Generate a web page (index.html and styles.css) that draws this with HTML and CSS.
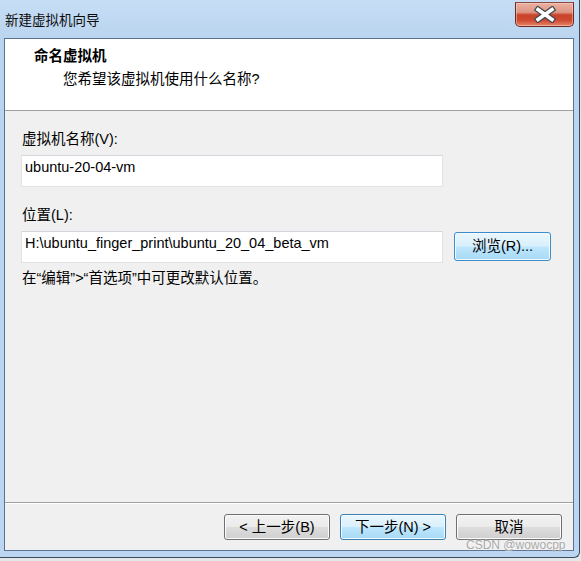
FILE: index.html
```html
<!DOCTYPE html>
<html lang="zh-CN">
<head>
<meta charset="utf-8">
<title>新建虚拟机向导</title>
<link rel="stylesheet" href="styles.css">
</head>
<body>
<div class="window">
  <div class="titlebar">
    <span class="title">新建虚拟机向导</span>
    <div class="close">
      <svg class="close-x" width="26" height="17" viewBox="0 0 26 17">
        <path d="M6 3.5 L20 13.5 M20 3.5 L6 13.5" stroke="#3d4650" stroke-width="6" stroke-linecap="square" fill="none"/>
        <path d="M6 3.5 L20 13.5 M20 3.5 L6 13.5" stroke="#ffffff" stroke-width="3.6" stroke-linecap="square" fill="none"/>
      </svg>
    </div>
  </div>
  <div class="client">
    <div class="header">
      <div class="h-title">命名虚拟机</div>
      <div class="h-sub">您希望该虚拟机使用什么名称?</div>
    </div>
    <div class="body">
      <div class="label">虚拟机名称(V):</div>
      <div class="field field-1">ubuntu-20-04-vm</div>
      <div class="label label-2">位置(L):</div>
      <div class="row">
        <div class="field">H:\ubuntu_finger_print\ubuntu_20_04_beta_vm</div>
        <button class="btn btn-blue browse" type="button">浏览(R)...</button>
      </div>
      <div class="note">在“编辑”&gt;“首选项”中可更改默认位置。</div>
    </div>
    <div class="footer">
      <button class="btn" type="button">&lt; 上一步(B)</button>
      <button class="btn btn-blue" type="button">下一步(N) &gt;</button>
      <button class="btn" type="button">取消</button>
    </div>
  </div>
  <div class="watermark">CSDN @wowocpp</div>
</div>
</body>
</html>
```
FILE: styles.css
```css
* {
  box-sizing: border-box;
}

html,
body {
  margin: 0;
  padding: 0;
}

body {
  width: 581px;
  height: 561px;
  overflow: hidden;
  background: #e4e7ea;
  font-family: "Liberation Sans", "Noto Sans CJK SC", sans-serif;
  font-size: 14.5px;
  color: #000;
}

.window {
  position: relative;
  width: 580px;
  height: 558px;
  display: flex;
  flex-direction: column;
  background: linear-gradient(to bottom, #c6ddf5 0px, #bad4ef 40px, #bcd6f1 100%);
  border-right: 1px solid #3b4b5e;
  border-bottom: 1px solid #3b4b5e;
  border-bottom-right-radius: 6px;
}

.titlebar {
  height: 38px;
  display: flex;
  align-items: flex-start;
  padding-left: 5px;
  flex: none;
}

.title {
  font-size: 13.5px;
  line-height: 16px;
  margin-top: 13px;
  color: #0c0c0c;
}

.close {
  margin-left: auto;
  margin-right: 5px;
  margin-top: 2px;
  width: 59px;
  height: 25px;
  border: 1px solid #6a2c25;
  border-top-color: #8a4a40;
  border-radius: 0 0 5px 5px;
  background: linear-gradient(to bottom, #eab0a2 0%, #df9684 40%, #c9432b 52%, #cf4a31 75%, #e6866a 100%);
  box-shadow: inset 0 0 0 1px rgba(255, 220, 210, 0.45);
  display: flex;
  align-items: center;
  justify-content: center;
}

.close-x {
  display: block;
}

.client {
  margin-left: 4px;
  width: 570px;
  height: 513px;
  flex: none;
  border: 1px solid #5c7290;
  background: #f0f0f0;
  display: flex;
  flex-direction: column;
}

.header {
  background: #fff;
  height: 72px;
  flex: none;
  border-bottom: 1px solid #a0a0a0;
  padding: 9px 0 0 29px;
}

.h-title {
  font-weight: bold;
  line-height: 17px;
}

.h-sub {
  margin-top: 6px;
  padding-left: 29px;
  line-height: 17px;
}

.body {
  flex: 1;
  padding: 20px 0 0 16px;
}

.label {
  line-height: 17px;
  padding-left: 1px;
}

.label-2 {
  margin-top: 20px;
}

.field {
  width: 422px;
  height: 32px;
  background: #fff;
  border: 1px solid #dfe2e7;
  border-top-color: #d3d7dd;
  padding: 3px 0 0 3px;
  line-height: 17px;
  white-space: nowrap;
}

.field-1 {
  margin-top: 7px;
}

.row {
  margin-top: 7px;
  display: flex;
  align-items: flex-start;
  gap: 11px;
}

.note {
  margin-top: 7px;
  padding-left: 1px;
  line-height: 17px;
}

.footer {
  flex: none;
  border-top: 1px solid #a0a0a0;
  box-shadow: inset 0 1px 0 #ffffff;
  padding: 11px 11px 10px 0;
  display: flex;
  justify-content: flex-end;
  gap: 10px;
}

.btn {
  width: 106px;
  height: 26px;
  padding: 0;
  font: inherit;
  line-height: 17px;
  color: #000;
  border: 1px solid #707070;
  border-radius: 3px;
  background: linear-gradient(to bottom, #f2f2f2 0%, #ebebeb 48%, #dddddd 52%, #cfcfcf 100%);
  box-shadow: inset 0 0 0 1px #fbfbfb;
}

.btn-blue {
  border-color: #3c7fb1;
  background: linear-gradient(to bottom, #eaf6fd 0%, #d9f0fc 48%, #bee6fd 52%, #a7d9f5 100%);
  box-shadow: inset 0 0 0 1px #f4fbfe;
}

.browse {
  width: 97px;
  height: 29px;
  margin-top: 1px;
  border-color: #3a8ccc;
}

.watermark {
  position: absolute;
  left: 466px;
  top: 538px;
  font-size: 12px;
  line-height: 14px;
  color: #a8a8a8;
  text-shadow: 0 0 2px #ffffff;
  white-space: nowrap;
}
```
